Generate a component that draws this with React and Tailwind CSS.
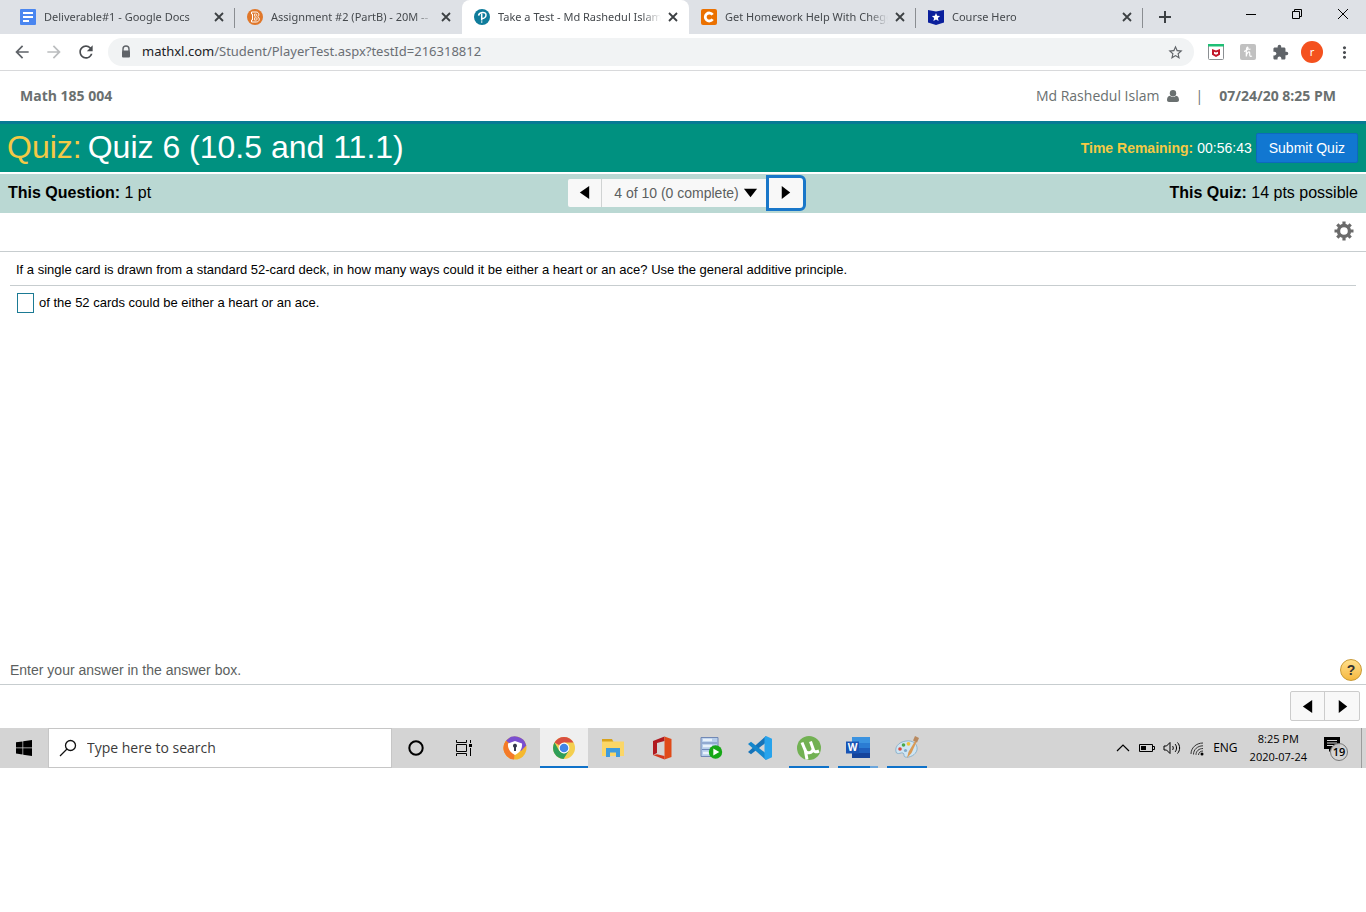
import { MdArrowBack, MdArrowForward, MdExtension, MdMoreVert, MdRefresh, MdStarBorder } from 'react-icons/md'

function DocsIcon() {
  return (
    <svg viewBox="0 0 16 16" className="size-4">
      <rect width="16" height="16" rx="1" fill="#4a86f0" />
      <path d="M3 4h10M3 8h10M3 12h6" stroke="#fff" strokeWidth="1.800" />
    </svg>
  )
}

function BartlebyIcon() {
  return (
    <svg viewBox="0 0 16 16" className="size-4">
      <circle cx="8" cy="8" r="8" fill="#e0772a" />
      <path d="M4.500 3h4.600c3.300 0 3.400 3.800 1.600 4.800 2.500 1 2.100 5.200-1.400 5.200H4.500v-2h1V5h-1z" fill="none" stroke="#fff" />
      <path d="M7.500 5h1.300c1.500 0 1.400 2.200 0 2.200H7.500zM7.500 8.800h1.600c1.600 0 1.500 2.300 0 2.300H7.500z" fill="none" stroke="#fff" strokeWidth=".8" />
    </svg>
  )
}

function PearsonIcon() {
  return (
    <svg viewBox="0 0 16 16" className="size-4">
      <circle cx="8" cy="8" r="8" fill="#0f7c9b" />
      <path d="M4.600 6.600C4.800 3.400 11.900 2 12 6c0 2.500-2.400 3.700-4.300 3.400M7.700 4.800v6.700" fill="none" stroke="#fff" strokeWidth="1.500" />
      <circle cx="7.700" cy="13" r=".8" fill="#fff" />
    </svg>
  )
}

function CheggIcon() {
  return (
    <svg viewBox="0 0 16 16" className="size-4">
      <rect width="16" height="16" rx="2" fill="#eb7100" />
      <path d="M11.600 5.800A4 4 0 1 0 11.600 10.200" fill="none" stroke="#fff" strokeWidth="2.800" />
    </svg>
  )
}

function CourseHeroIcon() {
  return (
    <svg viewBox="0 0 16 16" className="size-4">
      <path d="M0 1l8 1.500L16 1v12.500L8 16l-8-2.500z" fill="#0a1f9c" />
      <path d="M8 4l1.200 2.700 2.900.3-2.200 2 .7 2.900L8 10.400 5.400 11.900l.7-2.900-2.200-2 2.900-.3z" fill="#fff" />
    </svg>
  )
}

const tabs = [
  { title: 'Deliverable#1 - Google Docs', icon: <DocsIcon />, line: true },
  { title: 'Assignment #2 (PartB) - 20M --', icon: <BartlebyIcon /> },
  { title: 'Take a Test - Md Rashedul Islam', icon: <PearsonIcon />, active: true },
  { title: 'Get Homework Help With Chegg', icon: <CheggIcon />, line: true },
  { title: 'Course Hero', icon: <CourseHeroIcon />, line: true },
]

function Tab({ tab }) {
  return (
    <div className={`relative flex h-full min-w-0 max-w-[227px] flex-1 items-center pr-2 pl-3 ${tab.active ? 'rounded-t-lg bg-white' : ''}`}>
      {tab.icon}
      <a href="#" className="ml-2 min-w-0 flex-1 overflow-hidden whitespace-nowrap text-[#45494d] [mask-image:linear-gradient(to_right,black_88%,transparent)]">{tab.title}</a>
      <button aria-label="Close tab" className="ml-1 flex size-4 items-center justify-center text-[#3c4043]">
        <svg viewBox="0 0 10 10" className="size-2.5"><path d="M1 1l8 8M9 1L1 9" stroke="currentColor" strokeWidth="1.800" /></svg>
      </button>
      {tab.line && <span className="absolute top-2 right-0 h-5 w-px bg-[#8a8d91]" />}
    </div>
  )
}

function BrowserChrome() {
  return (
    <header className="font-['Noto_Sans','Open_Sans',sans-serif]">
      <div className="flex h-[34px] items-center bg-[#dee1e6] pl-2 text-[11px]">
        {tabs.map(tab => <Tab key={tab.title} tab={tab} />)}
        <button aria-label="New tab" className="ml-3.5 text-[#3c4043]">
          <svg viewBox="0 0 16 16" className="size-4"><path d="M8 2v12M2 8h12" stroke="currentColor" strokeWidth="2" /></svg>
        </button>
        <div className="mb-1.5 ml-auto flex text-black">
          <button aria-label="Minimize" className="flex w-[46px] justify-center"><svg viewBox="0 0 12 12" className="size-3"><path d="M1 6.500h10" stroke="currentColor" /></svg></button>
          <button aria-label="Restore" className="flex w-[46px] justify-center"><svg viewBox="0 0 12 12" className="size-3" fill="none" stroke="currentColor"><path d="M1.500 3.500h7v7h-7zM3.500 3.500v-2h7v7h-2" /></svg></button>
          <button aria-label="Close" className="flex w-[46px] justify-center"><svg viewBox="0 0 12 12" className="size-3" stroke="currentColor"><path d="M1 1l10 10M11 1L1 11" /></svg></button>
        </div>
      </div>
      <div className="flex items-center border-b border-[#d8d9db] py-1 pr-3 pl-3 text-[#5f6368]">
        <button aria-label="Back" className="mr-3"><MdArrowBack size={20} /></button>
        <button aria-label="Forward" className="mr-3 text-[#bbbdbf]"><MdArrowForward size={20} /></button>
        <button aria-label="Reload" className="mr-3 text-[#4a4d51]"><MdRefresh size={20} /></button>
        <div className="flex h-7 flex-1 items-center rounded-full bg-[#f1f3f4] pr-2.5 pl-3">
          <svg viewBox="0 0 12 14" className="h-3.5 w-3"><path d="M3 6V4a3 3 0 0 1 6 0v2" fill="none" stroke="currentColor" strokeWidth="1.400" /><rect x="2" y="5.500" width="8" height="7" rx="1" fill="currentColor" /></svg>
          <a href="#" className="ml-2.5 text-[13px] text-[#6b6f74]"><span className="text-[#202124]">mathxl.com</span>/Student/PlayerTest.aspx?testId=216318812</a>
          <button aria-label="Bookmark" className="ml-auto"><MdStarBorder size={17} /></button>
        </div>
        <div className="ml-3.5 flex items-center gap-4">
          <button aria-label="McAfee WebAdvisor">
            <svg viewBox="0 0 16 16" className="size-4">
              <rect x=".5" y=".5" width="15" height="15" rx="1" fill="#fff" stroke="#8b8f93" />
              <path d="M0 0h16v2.500H0z" fill="#1fbf75" />
              <path d="M4 5l4 1.600L12 5v5.800L8 13l-4-2.200zM6 7.700v2L8 10.800l2-1.100v-2l-2 .800z" fill="#c2172a" fillRule="evenodd" />
            </svg>
          </button>
          <button aria-label="Honey">
            <svg viewBox="0 0 16 16" className="size-4">
              <rect width="16" height="16" rx="2" fill="#c1c1c1" />
              <path d="M4 7.500C7 6.500 9 4.500 7.800 3.300 6.200 2.700 6.300 6 6.300 12.500c.2-4 3.200-6 3.400-3.700.1 1.700-.500 4.700 2.300 3.200M8.500 5.500l2-.500" fill="none" stroke="#fff" strokeWidth="1.200" />
            </svg>
          </button>
          <button aria-label="Extensions"><MdExtension size={17} /></button>
        </div>
        <button className="ml-3 flex size-[22px] items-center justify-center rounded-full bg-[#f4511e] text-[11px] text-white">r</button>
        <button aria-label="Menu" className="ml-3 text-[#4a4d51]"><MdMoreVert size={19} /></button>
      </div>
    </header>
  )
}

function Arrow({ dir }) {
  const shapes = { left: 'M13 1v14L3 8z', right: 'M4 1v14l9-7z', down: 'M1 4h14L8 13z' }
  return <svg viewBox="0 0 16 16" className="size-[15px]" fill="#000"><path d={shapes[dir]} /></svg>
}

function GearIcon() {
  return (
    <svg viewBox="0 0 20 20" className="size-5" stroke="currentColor" fill="none">
      <circle cx="10" cy="10" r="5.500" strokeWidth="3.400" />
      <path d="M10 .5v3M10 16.500v3M.5 10h3M16.500 10h3M3.300 3.300l2 2M14.700 14.700l2 2M16.700 3.300l-2 2M5.300 14.700l-2 2" strokeWidth="3.200" />
    </svg>
  )
}

function Quiz() {
  return (
    <main className="font-['Liberation_Sans',Arial,sans-serif]">
      <div className="flex h-[50px] items-center justify-between px-[30px] pl-5 font-['Open_Sans',sans-serif] text-sm text-[#6a7070]">
        <strong>Math 185 004</strong>
        <div className="flex items-center">
          <a href="#">Md Rashedul Islam</a>
          <svg viewBox="0 0 12 12" className="ml-2 size-3" fill="currentColor"><circle cx="6" cy="3.200" r="3.200" /><path d="M3 5.700c1.500 1.600 4.500 1.600 6 0 2.300.4 3 2.500 3 4.300 0 1.300-.8 2-2 2H2c-1.200 0-2-.7-2-2 0-1.800.7-3.900 3-4.300z" /></svg>
          <span className="mr-4 ml-4">|</span>
          <strong>07/24/20 8:25 PM</strong>
        </div>
      </div>

      <div className="flex h-[51px] items-center justify-between border-t-3 border-[#077a94] bg-[#009180] pr-2 pl-[7px] text-white">
        <h1 className="flex gap-1.5 pb-0.5 text-[32px]"><span className="text-[#f5c945]">Quiz:</span> <span>Quiz 6 (10.5 and 11.1)</span></h1>
        <div className="flex items-center text-sm">
          <strong className="text-[#f5c945]">Time Remaining:</strong>
          <span className="ml-1">00:56:43</span>
          <button className="ml-1 h-[30px] rounded-xs border border-[#0d69bd] bg-[#1177d1] px-3">Submit Quiz</button>
        </div>
      </div>

      <div className="mt-0.5 grid h-[39px] grid-cols-[1fr_auto_1fr] items-center bg-[#bad8d3] px-2 pb-0.5 text-base text-black">
        <div><strong>This Question:</strong> 1 pt</div>
        <div className="ml-2 flex h-9 items-center">
          <button aria-label="Previous question" className="flex h-7 w-[34px] items-center justify-center rounded-l-xs border-r border-[#d0d3d3] bg-[#f8f8f8]"><Arrow dir="left" /></button>
          <button className="flex h-7 items-center gap-1 bg-[#f8f8f8] pr-2 pl-3 text-sm text-[#5c5f60]">4 of 10 (0 complete) <Arrow dir="down" /></button>
          <button aria-label="Next question" className="flex h-9 w-10 items-center justify-center rounded-r-md border-3 border-[#1977c9] bg-[#f8f8f8]"><Arrow dir="right" /></button>
        </div>
        <div className="text-right"><strong>This Quiz:</strong> 14 pts possible</div>
      </div>

      <div className="flex h-[39px] items-center justify-end border-b border-[#c7cdcf] px-3 pb-0.5">
        <button aria-label="Settings" className="text-[#6a6a6a]"><GearIcon /></button>
      </div>

      <section className="min-h-[407px] px-2.5 text-[13px] text-black">
        <p className="border-b border-[#c7cdcf] px-1.5 pt-[9px] pb-[7px] leading-[17px]">If a single card is drawn from a standard 52-card deck, in how many ways could it be either a heart or an ace? Use the general additive principle.</p>
        <label className="flex items-center px-[7px] pt-[7px]">
          <input type="text" className="mr-[5px] h-5 w-[17px] border border-[#1b7a94] bg-white outline-none" />
          of the 52 cards could be either a heart or an ace.
        </label>
      </section>

      <div className="flex items-center justify-between border-b border-[#c7cdcf] pr-1 pb-[3px] pl-2.5 text-sm text-[#5c5f60]">
        <p>Enter your answer in the answer box.</p>
        <button aria-label="Help" className="flex size-[22px] items-center justify-center rounded-full border border-[#c99a35] bg-linear-to-b from-[#ffe08a] to-[#f5b83c] text-sm font-bold text-[#333]">?</button>
      </div>
      <div className="flex justify-end px-1.5 pt-1.5 pb-[7px]">
        <div className="flex h-[30px] divide-x divide-[#ccc] rounded-xs border border-[#ccc] bg-[#f8f8f8]">
          <button aria-label="Previous" className="flex w-[34px] items-center justify-center"><Arrow dir="left" /></button>
          <button aria-label="Next" className="flex w-[34px] items-center justify-center"><Arrow dir="right" /></button>
        </div>
      </div>
    </main>
  )
}

function SecureBrowserIcon() {
  return (
    <svg viewBox="0 0 24 24" className="size-6">
      <circle cx="12" cy="12" r="11.500" fill="#f5b82e" />
      <path d="M12 12L3 4.800A11.500 11.500 0 0 1 23.300 9.500L18 15z" fill="#7a4fd0" />
      <path d="M12 12L3 4.800A11.500 11.500 0 0 0 11 23.500z" fill="#f47a28" />
      <path d="M12 5l7 2.500c.5 5-2 9-7 11.500-5-2.500-7.500-6.500-7-11.500z" fill="#fff" />
      <path d="M10 10a2 2 0 1 1 3 1.500V15h-2v-3.500a2 2 0 0 1-1-1.500z" fill="#34384a" />
    </svg>
  )
}

function ChromeIcon() {
  return (
    <svg viewBox="0 0 24 24" className="size-6">
      <circle cx="12" cy="12" r="11" fill="#f4cf4f" />
      <path d="M12 12L2.500 6.500A11 11 0 0 1 21.500 6.500H12z" fill="#d94f41" />
      <path d="M2.500 6.500L7.200 14.700 12 17.500 16.800 14.700 11.500 23A11 11 0 0 1 2.500 6.500z" fill="#2f9e58" />
      <circle cx="12" cy="12" r="5.400" fill="#fff" />
      <circle cx="12" cy="12" r="4.300" fill="#4285e8" />
    </svg>
  )
}

function FolderIcon() {
  return (
    <svg viewBox="0 0 24 24" className="size-6">
      <path d="M1 3h10l1.500 3H1z" fill="#d9a31c" />
      <path d="M1 5.500h22V20H1z" fill="#fbd667" />
      <path d="M5 12h14v9h-4v-4.500H9V21H5z" fill="#3f9bdc" />
    </svg>
  )
}

function OfficeIcon() {
  return (
    <svg viewBox="0 0 24 24" className="size-6">
      <path d="M14.500.5L3 5v14l4-2V7l7.500-2z" fill="#b01a20" />
      <path d="M14.500.5L21.500 3v18l-7 2.500z" fill="#e04a18" />
      <path d="M3 19l11.500 4.500V20L7 18.200z" fill="#d5371b" />
    </svg>
  )
}

function ServerIcon() {
  return (
    <svg viewBox="0 0 24 24" className="size-6">
      <path d="M2 1.500h17v19H2z" fill="#b6cdea" stroke="#7188b5" />
      <path d="M3 7h15M3 13.500h15" stroke="#6e87b8" />
      <path d="M4 4h9M4 10h9M4 17h7" stroke="#e8f1fb" strokeWidth="2.500" />
      <circle cx="16.500" cy="16" r="6.700" fill="#16a716" />
      <path d="M14.300 12.500v7l6-3.500z" fill="#fff" />
    </svg>
  )
}

function VsCodeIcon() {
  return (
    <svg viewBox="0 0 24 24" className="size-6">
      <path d="M18 0v6.500L3 18.300 0 16z" fill="#1673b8" />
      <path d="M18 24v-6.500L3 5.700 0 8z" fill="#1486cc" />
      <path d="M18 0l6 2.700v18.600L18 24l-1.500-1.500v-21z" fill="#27a3ec" />
    </svg>
  )
}

function TorrentIcon() {
  return (
    <svg viewBox="0 0 24 24" className="size-6">
      <circle cx="12" cy="12" r="12" fill="#72b153" />
      <path d="M5 6.500l3.500 8.500c1.200 2.600 6.800 2.500 7-1.500M13.500 5.500l3 8.500c.6 1.900 2.500 2.300 5.500 1M8 13l2 10.500" fill="none" stroke="#fff" strokeWidth="3" />
    </svg>
  )
}

function WordIcon() {
  return (
    <svg viewBox="0 0 24 24" className="size-6">
      <path d="M6 1h18v6H6z" fill="#3b93e0" />
      <path d="M6 7h18v5H6z" fill="#2b7cd3" />
      <path d="M6 12h18v5H6z" fill="#1f5fbd" />
      <path d="M6 17h18v5H6z" fill="#15439b" />
      <path d="M0 5.500h13v12H0z" fill="#1853b4" />
      <text x="6.500" y="15" textAnchor="middle" fontSize="10" fontWeight="bold" fontFamily="Open Sans, sans-serif" fill="#fff">W</text>
    </svg>
  )
}

function PaintIcon() {
  return (
    <svg viewBox="0 0 24 24" className="size-6">
      <path d="M11 5c7-1 12 3 11 9-1.500 5-7 8-12 7-2-.8 0-3-2-4-2-.7-4 1.500-6.500 0C-1 12 3 6 11 5z" fill="#cfe5f3" stroke="#7faac7" strokeWidth=".8" />
      <circle cx="5" cy="13" r="1.800" fill="#d8493d" />
      <circle cx="8.500" cy="9" r="1.800" fill="#4aa94c" />
      <circle cx="13.500" cy="7.800" r="1.900" fill="#f0c23b" />
      <circle cx="10.500" cy="14.500" r="1.600" fill="#7ea9c9" />
      <path d="M20 5l1.500 1-5 11-4.500 5 1.500-6z" fill="#d99a55" />
      <path d="M18 4.500L20 0l4 2-2 4.500z" fill="#b98a60" />
    </svg>
  )
}

const apps = [
  { name: 'Secure Browser', icon: <SecureBrowserIcon /> },
  { name: 'Google Chrome', icon: <ChromeIcon />, active: true },
  { name: 'File Explorer', icon: <FolderIcon /> },
  { name: 'Office', icon: <OfficeIcon /> },
  { name: 'Server', icon: <ServerIcon /> },
  { name: 'Visual Studio Code', icon: <VsCodeIcon /> },
  { name: 'uTorrent', icon: <TorrentIcon />, running: true },
  { name: 'Word', icon: <WordIcon />, running: true, stacked: true },
  { name: 'Paint', icon: <PaintIcon />, running: true },
]

function Taskbar() {
  return (
    <footer className="flex h-10 items-center bg-[#d4d4d4] font-['Open_Sans',sans-serif] text-[11px] text-black">
      <button aria-label="Start" className="flex w-12 justify-center">
        <svg viewBox="0 0 16 16" className="size-4"><path d="M0 2.300L6.500 1.400v6.100H0zM7.200 1.300L16 0v7.500H7.200zM0 8.200h6.500v6.300L0 13.600zM7.200 8.200H16V16l-8.800-1.300z" /></svg>
      </button>
      <label className="flex h-full w-[344px] items-center border border-[#c6c6c6] bg-white px-2.5">
        <svg viewBox="0 0 18 18" className="size-[18px] shrink-0" fill="none" stroke="#111" strokeWidth="1.300"><circle cx="11.500" cy="6.500" r="5" /><path d="M8 10l-7 7" /></svg>
        <input aria-label="Search" placeholder="Type here to search" className="ml-2.5 min-w-0 flex-1 text-sm outline-none placeholder:text-[#3b3b3b]" />
      </label>
      <button aria-label="Cortana" className="flex w-12 justify-center">
        <svg viewBox="0 0 16 16" className="size-4"><circle cx="8" cy="8" r="6.700" fill="none" stroke="#000" strokeWidth="2" /></svg>
      </button>
      <button aria-label="Task view" className="mr-[3px] flex w-12 justify-center">
        <svg viewBox="0 0 16 16" className="size-4" fill="none" stroke="#000"><path d="M.5 0v2.500h10V0M.5 16v-2.500h10V16M.5 4.500h10v7H.500zM14.500 0v3M14.500 8v8" /><path d="M13 4h3v3h-3z" fill="#000" stroke="none" /></svg>
      </button>
      <div className="flex h-full gap-px">
        {apps.map(app => (
          <button key={app.name} aria-label={app.name} className={`relative flex w-12 items-center justify-center ${app.active ? 'bg-[#efefef]' : ''}`}>
            {app.icon}
            {app.active && <span className="absolute inset-x-0 bottom-0 h-0.5 bg-[#0f72c9]" />}
            {app.running && <span className="absolute inset-x-1 bottom-0 h-0.5 bg-[#0f72c9]" />}
            {app.stacked && <span className="absolute right-1 bottom-0 h-0.5 w-2 bg-[#6ba6dc]" />}
          </button>
        ))}
      </div>
      <div className="ml-auto flex h-full items-center gap-2">
        <svg viewBox="0 0 16 16" className="size-4" fill="none" stroke="#000" strokeWidth="1.200"><path d="M2 11l6-6 6 6" /></svg>
        <svg viewBox="0 0 16 16" className="size-4" fill="none" stroke="#000"><path d="M.5 4.500h13v7H.500zM13.500 6.500h2v3h-2" /><path d="M2 6h5v4H2z" fill="#000" stroke="none" /></svg>
        <svg viewBox="0 0 18 16" className="h-4 w-[18px]" fill="none" stroke="#000"><path d="M1 6h2.500L7 2.500v11L3.500 10H1zM9.500 6c1 1 1 3 0 4M12 4c2 2 2 6 0 8M14.500 2.500c2.800 3 2.800 8 0 11" /></svg>
        <svg viewBox="0 0 16 16" className="size-4" fill="none" stroke="#333"><path d="M2 14C2 8 7 3 14 3M4.500 14.500C4.500 9.500 8.500 5.800 14 5.800M7 14.800c0-3.800 3-6.300 7-6.300M9.500 15c0-2.300 2-4 4.500-4" /><circle cx="13" cy="14" r="1.500" fill="#000" stroke="none" /></svg>
        <span className="text-xs">ENG</span>
        <div className="ml-1 text-center leading-[18px]">
          <p>8:25 PM</p>
          <p>2020-07-24</p>
        </div>
        <button aria-label="Notifications" className="mr-2 ml-2">
          <svg viewBox="0 0 26 26" className="size-[26px]">
            <path d="M1 2h16v12H9l-3 3v-3H1z" />
            <path d="M4 5.500h10M4 8h10M4 10.500h7" stroke="#d4d4d4" />
            <circle cx="16" cy="17" r="8.500" fill="#d4d4d4" fillOpacity=".9" stroke="#777" />
            <text x="16" y="21" textAnchor="middle" fontSize="11" fontWeight="600" fontFamily="Open Sans, sans-serif">19</text>
          </svg>
        </button>
        <span className="-ml-1 h-full border-l border-[#9c9c9c] pl-1" />
      </div>
    </footer>
  )
}

export default function App() {
  return (
    <div className="bg-white">
      <BrowserChrome />
      <Quiz />
      <Taskbar />
    </div>
  )
}
